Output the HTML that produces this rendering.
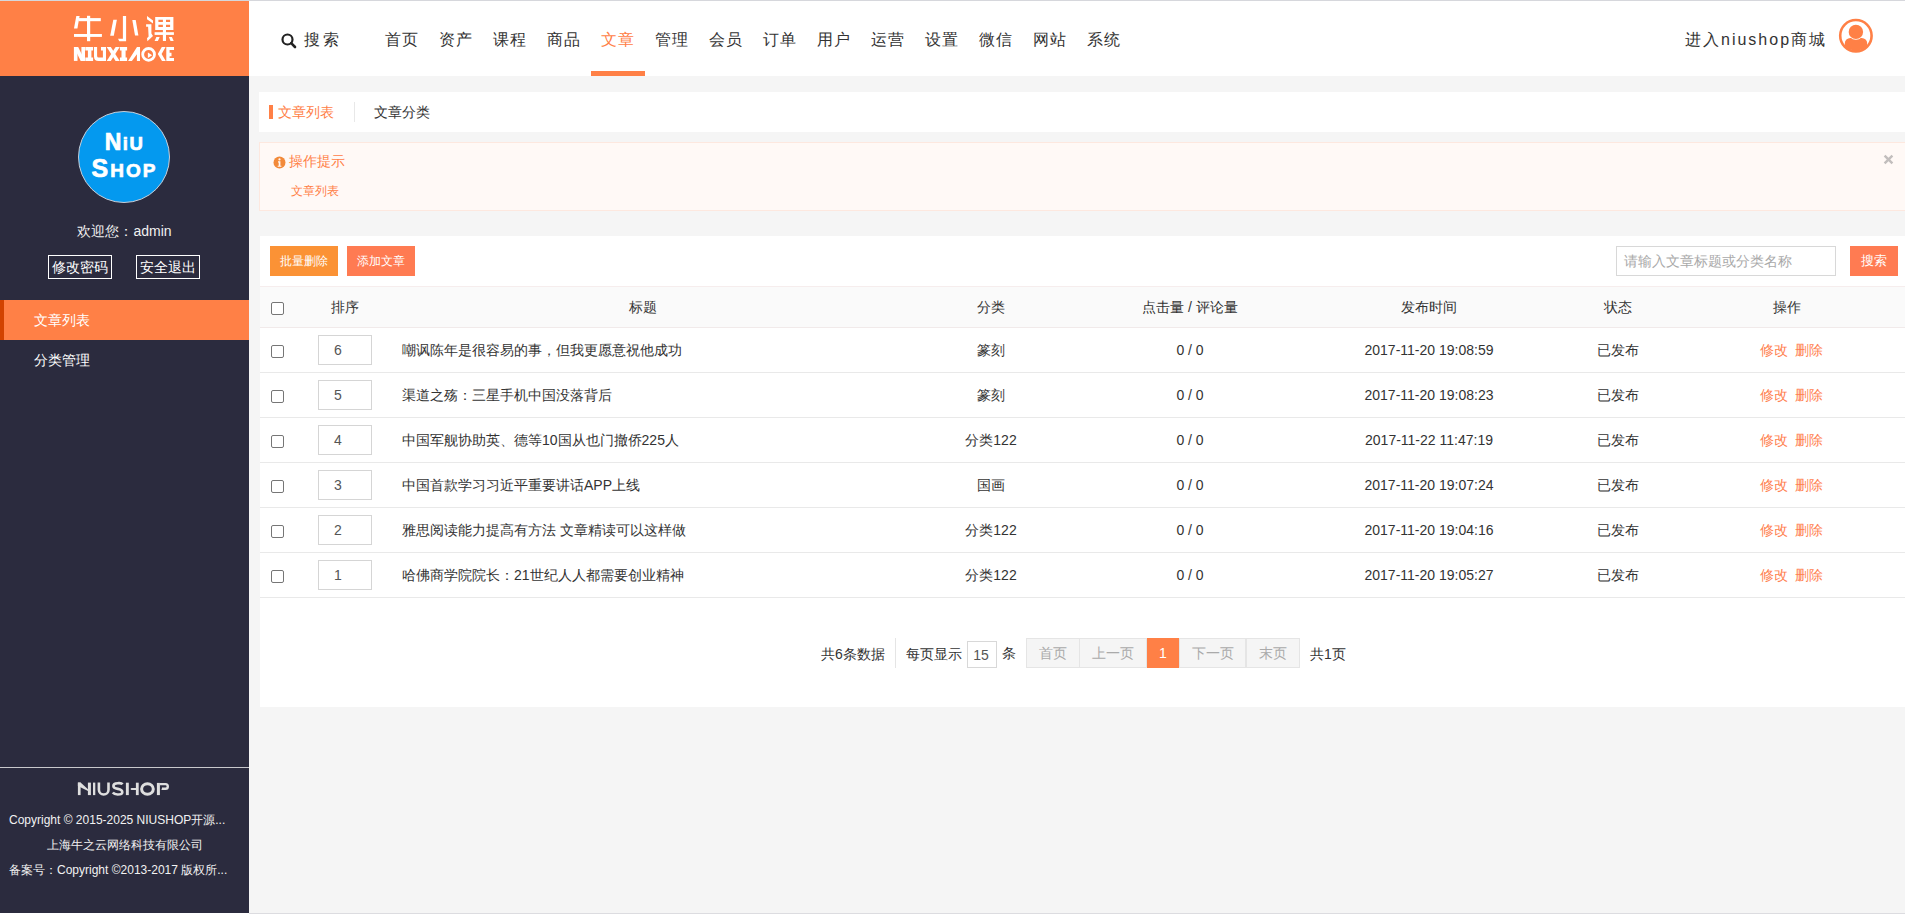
<!DOCTYPE html>
<html><head><meta charset="utf-8">
<style>
*{margin:0;padding:0;box-sizing:border-box}
html,body{width:1905px;height:915px;overflow:hidden;background:#fff}
body{font-family:"Liberation Sans",sans-serif;font-size:14px;color:#333;position:relative}
.abs{position:absolute}
#topline{left:0;top:0;width:1905px;height:1px;background:#d6d7dc}
#logo{left:0;top:1px;width:249px;height:75px;background:#ff8046}
#header{left:249px;top:1px;width:1656px;height:75px;background:#fff}
#side{left:0;top:76px;width:249px;height:837px;background:#2b2b3e}
#content{left:249px;top:76px;width:1656px;height:837px;background:#f5f5f5}
#botline{left:249px;top:913px;width:1656px;height:1px;background:#dcdce0}
.nav{position:absolute;top:29px;font-size:16px;letter-spacing:1px;color:#333;white-space:nowrap}
.nav.act{color:#ff8046}

.niu{color:#fff;font-weight:bold;font-size:22px;line-height:1;-webkit-text-stroke:0.7px #fff}
.sm{font-size:17px}
.sm2{font-size:18px}
.sbtn{width:64px;height:24px;border:1px solid #fff;color:#fff;font-size:14px;text-align:center;line-height:22px}
.foot{left:0;width:249px;text-align:center;color:#f2f2f2;font-size:12px;white-space:nowrap}
.tr{left:0;width:1645px;height:45px;border-bottom:1px solid #e9e9e9}
.cb{width:13px;height:13px;border:1px solid #767676;border-radius:2px;background:#fff}
.sortin{width:54px;height:30px;border:1px solid #d5d5d5;padding:6px 0 0 15px;color:#555}
.ctr{text-align:center}
.btn{width:68px;height:30px;color:#fff;font-size:12px;text-align:center;line-height:30px}
.pg{width:600px;height:30px}
.pgb{top:0;height:30px;background:#f5f5f5;border:1px solid #e5e5e5;color:#aaa;text-align:center;line-height:28px}
</style></head><body>
<div id="topline" class="abs"></div>
<div id="logo" class="abs"><svg class="abs" style="left:0;top:-1px" width="249" height="76" viewBox="0 0 249 76" fill="#fff">
<!-- 牛 -->
<polygon points="76.3,16 79.6,16 77.4,28.4 74,28.4"/>
<rect x="78.5" y="18.1" width="22.3" height="3.1"/>
<rect x="87" y="15.8" width="3.2" height="25.4"/>
<rect x="74" y="34" width="27.9" height="2.9"/>
<!-- 小 -->
<polygon points="113.3,19.8 116.9,19.8 113.8,35.8 110.2,35.8"/>
<path d="M122.9,16 H126.1 V41.2 H119.3 L118,38.7 H122.9 Z"/>
<polygon points="132.3,19.9 135.7,19.9 138.4,35.6 135,35.6"/>
<!-- 课 -->
<polygon points="147,16.1 153,20.5 153,23.6 147,19.2"/>
<polygon points="146.1,24.3 151.4,24.3 151.4,33.6 153,36 147.4,41.2 147,38.2 148.6,36.4 148.1,26.8 146.1,26.8"/>
<path fill-rule="evenodd" d="M155.2,17 H173.4 V29.9 H155.2 Z M158.4,19.8 H162.9 V22.1 H158.4 Z M166,19.8 H170.1 V22.1 H166 Z M158.4,24.8 H162.9 V27.1 H158.4 Z M166,24.8 H170.1 V27.1 H166 Z"/>
<rect x="154.6" y="32.2" width="19.3" height="2.7"/>
<rect x="162.9" y="29.5" width="3.1" height="11.5"/>
<polygon points="156.4,36.9 159.7,36.9 157.9,41 154.6,41"/>
<polygon points="168.9,36.9 171.9,36.9 173.7,41 170.5,41"/>
<!-- NIUXIAOKE -->
<rect x="73.9" y="47" width="3.6" height="13.9"/>
<rect x="81.4" y="47" width="3.6" height="13.9"/>
<polygon points="73.9,47 78.2,47 85,60.9 80.7,60.9"/>
<path d="M85.3,47 H93.1 V50.4 H91.4 V57.5 H93.1 V60.9 H85.3 V57.5 H87.9 V50.4 H85.3 Z"/>
<path d="M94,47 H97.1 V56 Q97.1,57.6 98.7,57.6 H102.9 V50.4 H101 V47 H106 V60.9 H98.5 Q94,60.9 94,56.4 Z"/>
<polygon points="106.7,47 110.8,47 119.7,60.9 115.6,60.9"/>
<polygon points="115.6,47 119.7,47 110.8,60.9 106.7,60.9"/>
<path d="M119.9,47 H127.1 V50.4 H125.6 V57.5 H127.1 V60.9 H119.9 V57.5 H121.5 V50.4 H119.9 Z"/>
<polygon points="128.1,60.9 137,47 140,47 140,60.9 136.9,60.9 136.9,54.2 131.9,60.9"/>
<circle cx="148.6" cy="54.4" r="5.9" fill="none" stroke="#fff" stroke-width="2.8"/>
<polygon points="147.9,52.6 152.2,55.3 147.9,58.1"/>
<polygon points="161.8,47 165.6,47 161.6,54.1 165.8,60.9 162,60.9 157.8,54.1"/>
<path d="M166.3,47 H174 V49.9 H169.6 V52.7 H171.5 V56.2 H169.6 V58 H174 V60.9 H166.3 Z"/>
</svg></div>
<div id="header" class="abs">
  <svg class="abs" style="left:32px;top:32px" width="16" height="16" viewBox="0 0 16 16"><circle cx="6.5" cy="6.5" r="5" fill="none" stroke="#222" stroke-width="2.2"/><path d="M10.2 10.2 L14 14" stroke="#222" stroke-width="2.6" stroke-linecap="round"/></svg>
  <div class="nav" style="left:55px;letter-spacing:2.6px">搜索</div>
  <div class="nav" style="left:136px">首页</div>
  <div class="nav" style="left:190px">资产</div>
  <div class="nav" style="left:244px">课程</div>
  <div class="nav" style="left:298px">商品</div>
  <div class="nav act" style="left:352px">文章</div>
  <div class="abs" style="left:342px;top:70px;width:54px;height:5px;background:#ff8046"></div>
  <div class="nav" style="left:406px">管理</div>
  <div class="nav" style="left:460px">会员</div>
  <div class="nav" style="left:514px">订单</div>
  <div class="nav" style="left:568px">用户</div>
  <div class="nav" style="left:622px">运营</div>
  <div class="nav" style="left:676px">设置</div>
  <div class="nav" style="left:730px">微信</div>
  <div class="nav" style="left:784px">网站</div>
  <div class="nav" style="left:838px">系统</div>
  <div class="nav" style="left:1436px;top:29px;letter-spacing:2px">进入niushop商城</div>
  <svg class="abs" style="left:1585px;top:13px" width="44" height="44" viewBox="0 0 44 44">
<defs><clipPath id="cc"><circle cx="21.9" cy="21.65" r="15"/></clipPath></defs>
<circle cx="21.9" cy="21.65" r="15.7" fill="#fff" stroke="#ff8046" stroke-width="2.6"/>
<g clip-path="url(#cc)"><rect x="10.8" y="24" width="22.4" height="22" rx="5.5" fill="#ff8046"/></g>
<circle cx="21.9" cy="17.9" r="7.9" fill="#fff"/>
<circle cx="21.9" cy="17.9" r="7.2" fill="#ff8046"/>
</svg>
</div>

<div id="side" class="abs">
  <div class="abs" style="left:78px;top:35px;width:92px;height:92px;border-radius:50%;background:#0499ef;border:1px solid #c9cdd6"></div>
  <div class="abs niu" style="left:0;top:55px;width:249px;text-align:center;font-size:23px;letter-spacing:1.5px">N<span style="font-size:18.5px">iU</span></div>
  <div class="abs niu" style="left:0;top:80px;width:249px;text-align:center;font-size:25px;letter-spacing:2px">S<span style="font-size:19px">HOP</span></div>
  <div class="abs" style="left:0;top:147px;width:249px;text-align:center;color:#f0f0f0;font-size:14px">欢迎您：admin</div>
  <div class="abs sbtn" style="left:48px;top:179px">修改密码</div>
  <div class="abs sbtn" style="left:136px;top:179px">安全退出</div>
  <div class="abs" style="left:0;top:224px;width:249px;height:40px;background:#ff8046"></div>
  <div class="abs" style="left:0;top:224px;width:4px;height:40px;background:#d24300"></div>
  <div class="abs" style="left:34px;top:236px;color:#fff;font-size:14px">文章列表</div>
  <div class="abs" style="left:34px;top:276px;color:#fff;font-size:14px">分类管理</div>
  <div class="abs" style="left:0;top:691px;width:249px;height:1px;background:#c8c8cc"></div>
  <svg class="abs" style="left:70px;top:700px" width="110" height="26" viewBox="70 776 110 26">
<g fill="#dedede"><rect x="77.9" y="782.6" width="2.7" height="12.5"/><polygon points="77.9,782.6 80.6,782.6 88,789.3 88,791.1 77.9,785.9"/><rect x="87.9" y="782.6" width="3" height="12.5"/><rect x="93" y="782.6" width="2.3" height="12.5"/>
<rect x="125.9" y="782.7" width="2.9" height="12.4"/><polygon points="130.4,789 131.4,788.1 136,788.1 136,789.9 131.4,789.9"/><rect x="135.9" y="782.7" width="2.8" height="12.4"/>
<rect x="156.9" y="782.9" width="3" height="12.2"/><polygon points="161.2,789.8 162.4,787.6 163,789.8"/></g>
<g fill="none" stroke="#dedede"><path d="M98.9,782.6 V789.7 A4.8,4.8 0 0 0 108.5,789.7 V782.6" stroke-width="2.6"/>
<path d="M122.6,784.3 C121.5,782.8 119.8,783.2 117.6,783.2 C114.8,783.2 113.4,784.4 113.4,786 C113.4,788 115.5,788.5 117.8,788.9 C120.5,789.4 122.3,790 122.3,792.2 C122.3,794 120.5,794.5 117.6,794.5 C115.4,794.5 113.8,794 112.8,792.6" stroke-width="2.6"/>
<ellipse cx="147.45" cy="789" rx="5.85" ry="5.3" stroke-width="3"/>
<path d="M159.9,784.1 H165.5 A2.3,2.3 0 0 1 165.5,788.7 H162" stroke-width="2.4"/></g>
</svg>
  <div class="abs foot" style="top:736px;left:9px;text-align:left">Copyright © 2015-2025 NIUSHOP开源...</div>
  <div class="abs foot" style="top:761px">上海牛之云网络科技有限公司</div>
  <div class="abs foot" style="top:786px;left:9px;text-align:left">备案号：Copyright ©2013-2017 版权所...</div>
</div>

<div id="content" class="abs">
  <div class="abs" style="left:10px;top:16px;width:1646px;height:40px;background:#fff">
    <div class="abs" style="left:10px;top:13px;width:4px;height:14px;background:#ff8046"></div>
    <div class="abs" style="left:19px;top:12px;color:#ff8046;font-size:14px">文章列表</div>
    <div class="abs" style="left:95px;top:10px;width:1px;height:20px;background:#e8e8e8"></div>
    <div class="abs" style="left:115px;top:12px;color:#333;font-size:14px">文章分类</div>
  </div>
  <div class="abs" style="left:10px;top:66px;width:1650px;height:69px;background:#fff9f6;border:1px solid #fde8df">
    <svg class="abs" style="left:13px;top:13px" width="13" height="13" viewBox="0 0 13 13"><circle cx="6.5" cy="6.5" r="6" fill="#f28a3a"/><circle cx="6.5" cy="3.4" r="1.1" fill="#fff9f6"/><path d="M5 5.3h2.4v4.4h1v1.1H4.7V9.7h1V6.4H5z" fill="#fff9f6"/></svg>
    <div class="abs" style="left:29px;top:10px;color:#ff8046;font-size:14px">操作提示</div>
    <div class="abs" style="left:31px;top:40px;color:#ff8046;font-size:12px">文章列表</div>
    <svg class="abs" style="left:1623px;top:11px" width="11" height="11" viewBox="0 0 11 11"><path d="M1.6 1.6L9.4 9.4M9.4 1.6L1.6 9.4" stroke="#c2bebd" stroke-width="2.4"/></svg>
  </div>
  <div class="abs" style="left:11px;top:160px;width:1645px;height:471px;background:#fff">
    <div class="abs btn" style="left:10px;top:10px;background:#fb9235">批量删除</div>
    <div class="abs btn" style="left:87px;top:10px;background:#ff7b52">添加文章</div>
    <div class="abs" style="left:1356px;top:10px;width:220px;height:30px;border:1px solid #d8d8d8;color:#a9a9a9;padding:6px 0 0 7px;font-size:14px">请输入文章标题或分类名称</div>
    <div class="abs btn" style="left:1590px;top:10px;width:48px;background:#ff7b52;font-size:13px">搜索</div>
    <div class="abs" style="left:0;top:50px;width:1645px;height:42px;background:#fafafa;border-top:1px solid #f6eded;border-bottom:1px solid #f1eaea">
      <div class="cb abs" style="left:11px;top:15px"></div>
      <div class="abs ctr" style="left:58px;width:54px;top:12px">排序</div>
      <div class="abs ctr" style="left:120px;width:526px;top:12px">标题</div>
      <div class="abs ctr" style="left:646px;width:170px;top:12px">分类</div>
      <div class="abs ctr" style="left:816px;width:228px;top:12px">点击量 / 评论量</div>
      <div class="abs ctr" style="left:1045px;width:248px;top:12px">发布时间</div>
      <div class="abs ctr" style="left:1292px;width:132px;top:12px">状态</div>
      <div class="abs ctr" style="left:1424px;width:206px;top:12px">操作</div>
    </div>
    
  <div class="abs tr" style="top:92px">
    <div class="cb abs" style="left:11px;top:17px"></div>
    <div class="abs sortin" style="left:58px;top:7px">6</div>
    <div class="abs" style="left:142px;top:14px">嘲讽陈年是很容易的事，但我更愿意祝他成功</div>
    <div class="abs ctr" style="left:646px;width:170px;top:14px">篆刻</div>
    <div class="abs ctr" style="left:816px;width:228px;top:14px">0 / 0</div>
    <div class="abs ctr" style="left:1045px;width:248px;top:14px">2017-11-20 19:08:59</div>
    <div class="abs ctr" style="left:1292px;width:132px;top:14px">已发布</div>
    <div class="abs" style="left:1500px;top:14px;color:#ff7f50">修改</div>
    <div class="abs" style="left:1535px;top:14px;color:#ff7f50">删除</div>
  </div>
  <div class="abs tr" style="top:137px">
    <div class="cb abs" style="left:11px;top:17px"></div>
    <div class="abs sortin" style="left:58px;top:7px">5</div>
    <div class="abs" style="left:142px;top:14px">渠道之殇：三星手机中国没落背后</div>
    <div class="abs ctr" style="left:646px;width:170px;top:14px">篆刻</div>
    <div class="abs ctr" style="left:816px;width:228px;top:14px">0 / 0</div>
    <div class="abs ctr" style="left:1045px;width:248px;top:14px">2017-11-20 19:08:23</div>
    <div class="abs ctr" style="left:1292px;width:132px;top:14px">已发布</div>
    <div class="abs" style="left:1500px;top:14px;color:#ff7f50">修改</div>
    <div class="abs" style="left:1535px;top:14px;color:#ff7f50">删除</div>
  </div>
  <div class="abs tr" style="top:182px">
    <div class="cb abs" style="left:11px;top:17px"></div>
    <div class="abs sortin" style="left:58px;top:7px">4</div>
    <div class="abs" style="left:142px;top:14px">中国军舰协助英、德等10国从也门撤侨225人</div>
    <div class="abs ctr" style="left:646px;width:170px;top:14px">分类122</div>
    <div class="abs ctr" style="left:816px;width:228px;top:14px">0 / 0</div>
    <div class="abs ctr" style="left:1045px;width:248px;top:14px">2017-11-22 11:47:19</div>
    <div class="abs ctr" style="left:1292px;width:132px;top:14px">已发布</div>
    <div class="abs" style="left:1500px;top:14px;color:#ff7f50">修改</div>
    <div class="abs" style="left:1535px;top:14px;color:#ff7f50">删除</div>
  </div>
  <div class="abs tr" style="top:227px">
    <div class="cb abs" style="left:11px;top:17px"></div>
    <div class="abs sortin" style="left:58px;top:7px">3</div>
    <div class="abs" style="left:142px;top:14px">中国首款学习习近平重要讲话APP上线</div>
    <div class="abs ctr" style="left:646px;width:170px;top:14px">国画</div>
    <div class="abs ctr" style="left:816px;width:228px;top:14px">0 / 0</div>
    <div class="abs ctr" style="left:1045px;width:248px;top:14px">2017-11-20 19:07:24</div>
    <div class="abs ctr" style="left:1292px;width:132px;top:14px">已发布</div>
    <div class="abs" style="left:1500px;top:14px;color:#ff7f50">修改</div>
    <div class="abs" style="left:1535px;top:14px;color:#ff7f50">删除</div>
  </div>
  <div class="abs tr" style="top:272px">
    <div class="cb abs" style="left:11px;top:17px"></div>
    <div class="abs sortin" style="left:58px;top:7px">2</div>
    <div class="abs" style="left:142px;top:14px">雅思阅读能力提高有方法 文章精读可以这样做</div>
    <div class="abs ctr" style="left:646px;width:170px;top:14px">分类122</div>
    <div class="abs ctr" style="left:816px;width:228px;top:14px">0 / 0</div>
    <div class="abs ctr" style="left:1045px;width:248px;top:14px">2017-11-20 19:04:16</div>
    <div class="abs ctr" style="left:1292px;width:132px;top:14px">已发布</div>
    <div class="abs" style="left:1500px;top:14px;color:#ff7f50">修改</div>
    <div class="abs" style="left:1535px;top:14px;color:#ff7f50">删除</div>
  </div>
  <div class="abs tr" style="top:317px">
    <div class="cb abs" style="left:11px;top:17px"></div>
    <div class="abs sortin" style="left:58px;top:7px">1</div>
    <div class="abs" style="left:142px;top:14px">哈佛商学院院长：21世纪人人都需要创业精神</div>
    <div class="abs ctr" style="left:646px;width:170px;top:14px">分类122</div>
    <div class="abs ctr" style="left:816px;width:228px;top:14px">0 / 0</div>
    <div class="abs ctr" style="left:1045px;width:248px;top:14px">2017-11-20 19:05:27</div>
    <div class="abs ctr" style="left:1292px;width:132px;top:14px">已发布</div>
    <div class="abs" style="left:1500px;top:14px;color:#ff7f50">修改</div>
    <div class="abs" style="left:1535px;top:14px;color:#ff7f50">删除</div>
  </div>
    <div class="abs pg" style="left:561px;top:402px">
      <span class="abs" style="left:0;top:8px">共6条数据</span>
      <span class="abs" style="left:74px;top:0;width:1px;height:30px;background:#e5e5e5"></span>
      <span class="abs" style="left:85px;top:8px">每页显示</span>
      <span class="abs" style="left:146px;top:3px;width:30px;height:27px;border:1px solid #d8d8d8;text-align:center;padding-top:5px;padding-right:2px;color:#555">15</span>
      <span class="abs" style="left:181px;top:7px">条</span>
      <div class="abs pgb" style="left:205px;width:54px">首页</div>
      <div class="abs pgb" style="left:258px;width:68px">上一页</div>
      <div class="abs pgb" style="left:326px;width:32px;background:#ff8046;border-color:#ff8046;color:#fff">1</div>
      <div class="abs pgb" style="left:358px;width:67px">下一页</div>
      <div class="abs pgb" style="left:425px;width:54px">末页</div>
      <span class="abs" style="left:489px;top:8px">共1页</span>
    </div>
  </div>
</div>
<div id="botline" class="abs"></div>
</body></html>
